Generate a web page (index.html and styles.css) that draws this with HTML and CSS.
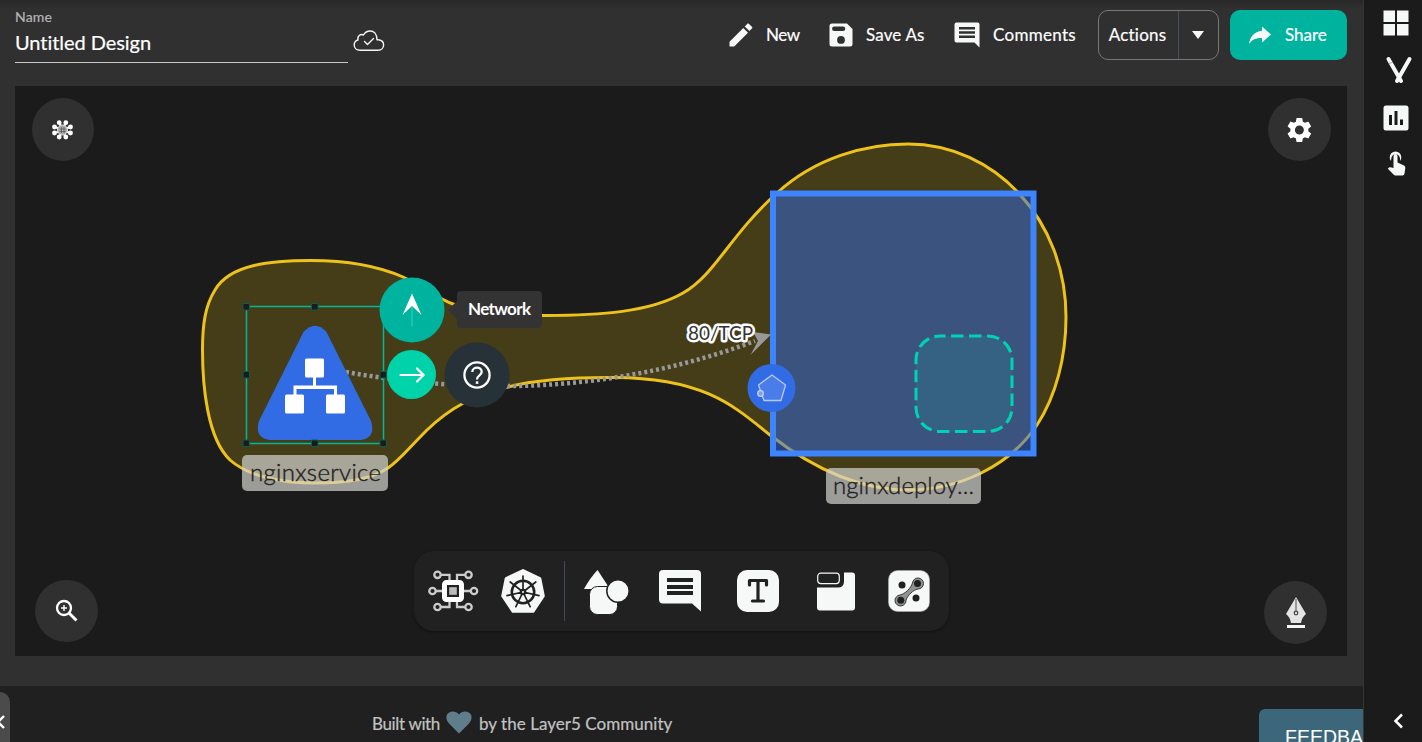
FILE: index.html
```html
<!DOCTYPE html>
<html lang="en">
<head>
<meta charset="utf-8">
<title>Untitled Design</title>
<link rel="stylesheet" href="styles.css">
</head>
<body>
<div class="app">
  <main class="main">
    <header class="header">
      <div class="name-field">
        <label class="name-label">Name</label>
        <div class="name-value">Untitled Design</div>
      </div>
      <svg class="cloud" width="32" height="22" viewBox="0 0 32 22" fill="none" stroke="#f5f5f5" stroke-width="1.4" stroke-linecap="round" stroke-linejoin="round"><path d="M7 20.3C3.500 20.300 1.200 18 1.200 15C1.200 12.500 2.800 10.600 5 10C4 6 7.600 3.600 10.500 5C12 2.300 14.300 1 17 1C21 1 24 4 24 9.800C24.300 9.700 25 9.700 25.500 9.800C28.500 10.200 30.600 12.300 30.600 15C30.600 18 28.300 20.300 25 20.300Z"/><path d="M11.500 11.500L14.500 14.500L20.500 8.500"/></svg>
      <nav class="actions">
        <button class="link new"><svg width="24" height="24" viewBox="0 0 24 24"><path d="M0.500 18.800V23.500H5.200L19 9.700L14.300 5ZM22.900 5.600C23.500 5.100 23.500 4.300 22.900 3.800L20 .900C19.500.400 18.700.400 18.200.900L15.700 3.400L20.400 8.100Z"/></svg><span>New</span></button>
        <button class="link save"><svg width="24" height="24" viewBox="0 0 24 24"><path fill-rule="evenodd" d="M3 .500H18L23.500 6V21A2.500 2.500 0 0 1 21 23.500H3A2.500 2.500 0 0 1 .500 21V3A2.500 2.500 0 0 1 3 .500ZM5.300 3.500A2 2 0 0 0 5.300 8H14A2 2 0 0 0 14 3.500ZM12 13A3.900 3.900 0 1 0 12 20.800A3.900 3.900 0 1 0 12 13Z"/></svg><span>Save As</span></button>
        <button class="link comments"><svg width="26" height="26" viewBox="0 0 26 26"><path fill-rule="evenodd" d="M2.500.500H23.500A2 2 0 0 1 25.500 2.500V25.500L20.500 20.500H2.500A2 2 0 0 1 .500 18.500V2.500A2 2 0 0 1 2.500.500ZM5 5V7.500H21V5ZM5 9.300V11.800H21V9.300ZM5 13.500V16H21V13.500Z"/></svg><span>Comments</span></button>
        <div class="split"><button class="split-main">Actions</button><button class="split-arrow"><svg width="12" height="8" viewBox="0 0 12 8"><path d="M0 0H12L6 8Z"/></svg></button></div>
        <button class="share"><svg width="24" height="20" viewBox="0 0 24 20"><path d="M14 1.500L23 9.500L14 17.500V13C8 13 4 14.500 1 19C2 12 6 6.500 14 5.800Z"/></svg><span>Share</span></button>
      </nav>
    </header>

    <section class="canvas">
      <svg class="graph" width="1332" height="570" viewBox="15 86 1332 570">
        <path class="bubble" d="M202.500 350C202.500 325 205 306 215 290C230 264 272 260.500 311 260.500C345 260.500 378 266 403 277C425 287 438 299 453 304C480 313 510 315.500 545 315.500C600 315.500 650 312 683 293C715 275 730 235 777 193C815 158 865 144 908 144C995 144 1066 220 1066 317C1066 357 1056 396 1037 425C1009 467 958 490 908 490C862 490 815 470 770 435C735 407 705 378 615 377.500C570 377 530 381 508 387C470 397 450 408 427 430C405 452 400 460 388 468C370 480 345 483 315 483C280 483 248 476 230 460C207 438 202.500 385 202.500 350Z"/>
        <rect x="773" y="193" width="260.500" height="260" fill="#326ce5" fill-opacity=".5"/>
        <rect x="773" y="193.500" width="260.500" height="260" fill="none" stroke="#3d84fd" stroke-width="6"/>
        <rect x="916" y="336" width="96" height="95.500" rx="24" fill="#00d3a9" fill-opacity=".1" stroke="#00d3b5" stroke-width="3" stroke-dasharray="12.500 5.500" stroke-dashoffset="7"/>
        <path class="edge" d="M346 372C470 394 610 395 755 341"/>
        <path d="M771 334.500L753 332L758 341L750.500 355Z" fill="#999"/>
        <text class="edge-label" x="688" y="340" textLength="65" lengthAdjust="spacingAndGlyphs">80/TCP</text>
        <circle cx="771.500" cy="388" r="24" fill="#326ce5"/>
        <path d="M772 375L785.500 385L781 400.500H764L758.500 385Z" fill="#fff" fill-opacity=".12" stroke="#b5c9f6" stroke-width="1.300" stroke-linejoin="round"/>
        <circle cx="760.500" cy="393.500" r="2.800" fill="#7ba0ee" stroke="#c8d7f9" stroke-width="1.200"/>

        <rect x="246.500" y="306.500" width="137" height="137" fill="none" stroke="#04b596" stroke-width="1.500"/>
        <path d="M303.500 332Q315 319.500 326.500 332L371 421Q376 438 361 440H270Q254 438 259 421Z" fill="#326ce5"/>
        <g fill="#fff"><rect x="305" y="358.500" width="19" height="19" rx="1.500"/><rect x="285" y="394.500" width="19" height="19" rx="1.500"/><rect x="326" y="394.500" width="19" height="19" rx="1.500"/><path d="M313 377H316V385.500H337V395H334V389H296.500V395H293.500V385.500H313Z"/></g>
        <g fill="#1b1b1b" stroke="#0d5c4d" stroke-width="1"><path d="M243 303.500h6.500v6.500h-6.500zM311.500 303.500h6.500v6.500h-6.500zM243 371.500h6.500v6.500h-6.500zM380 371.500h6.500v6.500h-6.500zM243 440h6.500v6.500h-6.500zM311.500 440h6.500v6.500h-6.500zM380 440h6.500v6.500h-6.500z"/></g>
        <rect class="plate" x="242" y="455" width="146" height="36" rx="5"/>
        <text class="node-label" x="250" y="481" textLength="131">nginxservice</text>
        <rect class="plate" x="826" y="468" width="155" height="36" rx="5"/>
        <text class="node-label" x="833" y="494" textLength="141">nginxdeploy...</text>

        <circle cx="412" cy="310" r="32.500" fill="#00b39f"/>
        <path d="M412 293.500L421.500 315L412 306L402.500 315Z" fill="#fff"/><path d="M411 307H413V326H411Z" fill="#24c0ae"/>
        <circle cx="411.500" cy="374.500" r="24.500" fill="#00d3a9"/>
        <path d="M400.500 375H423M417 368.500L423.500 375L417 381.500" fill="none" stroke="#fff" stroke-width="2.200" stroke-linecap="round"/>
        <circle cx="477" cy="375" r="32.500" fill="#263238"/>
        <circle cx="477" cy="375" r="12.600" fill="none" stroke="#fff" stroke-width="2.300"/>
        <path d="M472.300 372C472.300 366.300 481.700 366.300 481.700 371.800C481.700 375.500 477 375.300 477 379.500" fill="none" stroke="#fff" stroke-width="2.300"/><rect x="475.800" y="381.300" width="2.500" height="2.600" fill="#fff"/>
        <path d="M448 310L457 301V319Z" fill="#333"/><rect x="457" y="291" width="85" height="37" rx="4" fill="#333"/>
        <text class="tip" x="468" y="315" textLength="63">Network</text>
      </svg>

      <button class="round top-left"><svg width="22" height="22" viewBox="-10.5 -11 22 22"><g stroke="#fff" stroke-width="2.200"><path d="M-3.300-7.500L3.300 7.500M3.300-7.500L-3.300 7.500M-7.500-3L7.500 3M-7.500 3L7.500-3"/></g><g fill="#fff"><circle cx="-3.300" cy="-7.300" r="2.400"/><circle cx="3.300" cy="-7.300" r="2.400"/><circle cx="-3.300" cy="7" r="2.400"/><circle cx="3.300" cy="7" r="2.400"/><circle cx="-8" cy="-3" r="2.400"/><circle cx="-8" cy="3" r="2.400"/><circle cx="8" cy="-3" r="2.400"/><circle cx="8" cy="3" r="2.400"/></g><circle r="5" fill="#aaa" stroke="#ddd"/><path d="M-3-1H3M-3 1.500H3M-1-3V3M1.500-3V3" stroke="#555" stroke-width=".7"/></svg></button>
      <button class="round top-right"><svg width="30" height="30" viewBox="0.5 0 24 24"><path d="M19.140 12.940c.040-.300.060-.610.060-.940 0-.320-.020-.640-.070-.940l2.030-1.580c.180-.140.230-.410.120-.610l-1.920-3.320c-.120-.220-.370-.290-.590-.220l-2.390.960c-.500-.380-1.030-.700-1.620-.940l-.360-2.540c-.040-.240-.240-.410-.480-.410h-3.840c-.240 0-.430.170-.470.410l-.360 2.540c-.590.240-1.130.570-1.620.940l-2.390-.960c-.220-.080-.470 0-.590.220L2.740 8.870c-.120.210-.080.470.120.610l2.030 1.580c-.050.300-.090.630-.090.940s.020.640.070.940l-2.030 1.580c-.180.140-.230.410-.120.610l1.920 3.320c.120.220.370.290.590.220l2.390-.960c.500.380 1.030.700 1.620.940l.360 2.540c.050.240.240.410.480.410h3.840c.240 0 .440-.170.470-.410l.360-2.540c.590-.240 1.130-.560 1.620-.940l2.390.960c.220.080.470 0 .590-.220l1.920-3.320c.120-.220.070-.470-.120-.610zM12 15.600c-1.980 0-3.600-1.620-3.600-3.600s1.620-3.600 3.600-3.600 3.600 1.620 3.600 3.600-1.620 3.600-3.600 3.600z"/></svg></button>
      <button class="round bottom-left"><svg width="24" height="24" viewBox="0.5 0.5 24 24" fill="none" stroke="#fff"><circle cx="9.500" cy="9.500" r="7" stroke-width="2.300"/><path d="M14.500 14.500L22 22" stroke-width="3"/><path d="M6.500 9.500H12.500M9.500 6.500V12.500" stroke-width="1.400"/></svg></button>
      <button class="round bottom-right"><svg width="20" height="32" viewBox="0 0 20 32"><path d="M10 0L20 17Q16 20 15 26H5Q4 20 0 17Z" fill="#e4e4e4"/><path d="M10 2V14" stroke="#666" stroke-width="1.200"/><circle cx="10" cy="16" r="1.800" fill="#ddd" stroke="#444" stroke-width="1.200"/><path d="M1 28H19V31H1Z" fill="#f5f5f5"/></svg></button>

      <div class="dock">
        <svg width="50" height="44" viewBox="428 569 50 44"><g fill="none" stroke="#ccc" stroke-width="2.300"><path d="M449.500 580V574.800H441M457 580V574.800H465M449.500 600V607H441M457 600V607H465M442 591H436M463 591H470"/><circle cx="437.500" cy="574.800" r="3.200"/><circle cx="468.500" cy="574.800" r="3.200"/><circle cx="437.500" cy="607" r="3.200"/><circle cx="468.500" cy="607" r="3.200"/><circle cx="432.500" cy="591" r="3.200"/><circle cx="474" cy="591" r="3.200"/></g><rect x="444.500" y="582.500" width="17" height="17" rx="2" fill="#212121" stroke="#fff" stroke-width="5"/><rect x="449.200" y="587.200" width="7.600" height="7.600" fill="#bbb"/></svg>
        <svg class="wheel-icon" width="44" height="44" viewBox="-22 -22 44 44"><path d="M0-20.500L16.800-12.400L20.300 5L10 20.300H-10L-20.300 5L-16.800-12.400Z" fill="#f6f8f8" stroke="#f6f8f8" stroke-width="3" stroke-linejoin="round"/><g fill="none" stroke="#212121"><circle cy="1" r="11.200" stroke-width="2.600"/><g stroke-width="1.700" stroke-linecap="round"><path d="M0 1V-15M0 1L12.800-9M0 1L16 4.600M0 1L7.100 15.700M0 1L-7.100 15.700M0 1L-16 4.600M0 1L-12.800-9"/></g></g><circle cy="1" r="3.300" fill="#212121"/><circle cy="1" r="1" fill="#fff"/></svg>
        <i class="rule"></i>
        <svg class="shapes-icon" width="46" height="46" viewBox="583 569 46 46" fill="#f6f8f8"><path d="M597.500 570L610 589H584Q590 578 597.500 570Z"/><rect x="589.500" y="586.500" width="28" height="28" rx="8" stroke="#212121"/><circle cx="618" cy="591" r="11.200" stroke="#212121" stroke-width="1.500"/></svg>
        <svg class="note-icon" width="42" height="42" viewBox="0 0 42 42"><path fill="#f6f8f8" d="M4 0H38Q42 0 42 4V41.500L33 33.500H4Q0 33.500 0 29.500V4Q0 0 4 0Z"/><path d="M8 8H34V12H8ZM8 15H34V19H8ZM8 21H34V25H8Z" fill="#212121"/></svg>
        <svg class="text-icon" width="42" height="42" viewBox="0 0 42 42"><rect width="42" height="42" rx="10" fill="#f6f8f8"/><path d="M12.500 15V10.500H29.500V15M21 10.500V31M15.500 31H26.500" fill="none" stroke="#212121" stroke-width="3.200" stroke-linecap="round" stroke-linejoin="round"/></svg>
        <svg class="group-icon" width="38" height="39" viewBox="0 0 38 39"><path fill="#f6f8f8" d="M27 .500H35Q38 .500 38 3.500V35.500Q38 38.500 35 38.500H3Q0 38.500 0 35.500V15.500H21Q27 15.500 27 9.500Z"/><rect x=".7" y="1.200" width="21.600" height="10.400" rx="3" fill="#212121" stroke="#f6f8f8" stroke-width="1.200"/></svg>
        <svg class="bone-icon" width="42" height="42" viewBox="0 0 42 42"><rect x=".5" y=".5" width="41" height="41" rx="9" fill="#f6f8f8" stroke="#aaa" stroke-width=".6"/><path d="M24.500 13A5.500 5.500 0 1 1 30 19C25 20 20 25 18 30A5.500 5.500 0 1 1 12 25C17 24 23 18 24.500 13Z" fill="#909292" stroke="#3a3a3a"/><g fill="#202020"><circle cx="14" cy="15" r="3.500"/><circle cx="28" cy="28" r="3.500"/><circle cx="29.500" cy="13.500" r="3.500"/><circle cx="12.800" cy="30.300" r="3.500"/></g></svg>
      </div>
    </section>

    <footer class="footer">
      <div class="handle"><svg width="10" height="16" viewBox="0 0 10 16"><path d="M4 2L-2 8L4 14" fill="none" stroke="#fff" stroke-width="2.400"/></svg></div>
      <p class="built"><span class="built-with">Built with</span><svg width="26" height="23" viewBox="0 0 26 23"><path d="M13 22.500L3 12.500C-5 3 7-3.500 13 3.500C19-3.500 31 3 23 12.500Z" fill="#607d8b"/></svg><span class="community">by the Layer5 Community</span></p>
      <button class="feedback">FEEDBACK</button>
    </footer>
  </main>

  <aside class="sidebar">
    <svg width="26" height="26" viewBox="0 0 26 26"><path d="M.500.500H12V12H.500ZM14 .500H25.500V12H14ZM.500 14H12V25.500H.500ZM14 14H25.500V25.500H14Z"/></svg>
    <svg class="y-icon" width="28" height="28" viewBox="0 0 28 28" fill="none" stroke="#f6f8f8" stroke-width="4"><path d="M3.500 3L16 25" stroke-linecap="round"/><path d="M24.500 3L12 25" stroke-linecap="round"/><path d="M3 8L8 6" stroke="#777" stroke-width=".6"/></svg>
    <svg class="chart-icon" width="26" height="26" viewBox="0 0 26 26"><path fill-rule="evenodd" d="M3 .500H23Q25.500.500 25.500 3V23Q25.500 25.500 23 25.500H3Q.500 25.500.500 23V3Q.500.500 3 .500ZM6 10V20H9V10ZM11.500 6V20H14.500V6ZM17 14.500V20H20V14.500Z"/></svg>
    <svg class="touch-icon" width="20" height="26" viewBox="0 0 20 26"><path d="M4 11A5.800 5.800 0 1 1 13 11V8.500A3.600 3.600 0 0 0 4.300 8.500Z"/><path d="M6.500 6.300Q6.500 4 8.500 4T10.500 6.300V12.500L17 15.500Q18.500 16.300 18.300 18L17.500 23.500Q17.200 25.500 15.500 25.500H8.500Q7.500 25.500 6.800 24.700L.800 18.700L2 17.500Q2.600 17 3.400 17.200L6.500 18Z"/></svg>
    <svg class="chevron" width="12" height="16" viewBox="0 0 12 16"><path d="M10 1.500L3.500 8L10 14.500" fill="none" stroke="#fff" stroke-width="2.500"/></svg>
  </aside>
</div>
</body>
</html>
```

FILE: styles.css
```css
* { box-sizing: border-box; }
body { margin: 0; overflow: hidden; background: #303030; font-family: Lato, "Open Sans", sans-serif; color: #fff; }
button { margin: 0; padding: 0; border: 0; background: none; color: inherit; font: inherit; letter-spacing: inherit; white-space: nowrap; }
svg { display: block; flex: none; overflow: visible; }

.app { display: grid; grid-template-columns: 1363px 59px; width: 1422px; height: 742px; }
.main { display: grid; grid-template-rows: 86px 570px 30px 56px; min-width: 0; overflow: hidden; background: #303030; }

.header { display: flex; padding: 0 16px 0 15px; background: linear-gradient(#282828, #303030 9px); }
.name-field { width: 333px; height: 63px; padding-top: 8px; border-bottom: 1px solid #c8c8c8; }
.name-label { display: block; font-size: 14px; line-height: 18px; letter-spacing: .2px; color: #b5b5b5; -webkit-text-stroke: .2px; }
.name-value { margin-top: 4px; font-size: 20px; line-height: 24px; letter-spacing: -.05px; -webkit-text-stroke: .2px; }
.cloud { margin: 30px 0 0 5px; }
.actions { display: flex; margin-left: auto; padding-top: 10px; height: 60px; font-size: 17px; fill: #f6f8f8; -webkit-text-stroke: .2px; }
.link { display: flex; align-items: center; gap: 13px; }
.link span, .share span { padding-bottom: 2px; }
.new { width: 100px; letter-spacing: -.4px; }
.save { width: 125px; letter-spacing: .15px; }
.comments { width: 144px; letter-spacing: .3px; }
.split { display: flex; width: 121px; height: 50px; border: 1px solid #777; border-radius: 10px; }
.split-main { width: 80px; padding: 0 2px 2px 0; letter-spacing: .2px; border-right: 1px solid #46505f; }
.split-arrow { flex: 1; display: flex; align-items: center; justify-content: center; padding-right: 1px; }
.share { display: flex; align-items: center; gap: 13px; width: 117px; height: 50px; margin-left: 11px; padding-left: 18px; border-radius: 10px; background: #00b39f; }

.canvas { position: relative; width: 1332px; height: 570px; margin-left: 15px; background: #1b1b1b; }
.bubble { fill: #f1c40f; fill-opacity: .2; stroke: #edc21a; stroke-width: 3; }
.edge { fill: none; stroke: #999; stroke-width: 4.500; stroke-dasharray: 3 3; }
.edge-label { font-size: 19px; fill: #333; stroke: #fff; stroke-width: 5px; stroke-linejoin: round; paint-order: stroke; }
.node-label { font-size: 24px; font-weight: 300; fill: #222; stroke: #222; stroke-width: .4px; }
.plate { fill: #d3d3cf; fill-opacity: .7; }
.tip { font-size: 17px; font-weight: 700; fill: #fff; }

.round { position: absolute; display: flex; align-items: center; justify-content: center; width: 63px; height: 63px; border-radius: 50%; background: #303030; fill: #fff; }
.top-left { left: 17px; top: 12px; width: 62px; }
.top-right { right: 16px; top: 12px; }
.bottom-left { left: 20px; bottom: 14px; height: 62px; }
.bottom-right { right: 20px; bottom: 12px; }

.dock { position: absolute; left: 399px; top: 465px; display: flex; align-items: center; width: 535px; height: 80px; padding-left: 14px; border-radius: 20px; background: #212121; box-shadow: 0 1px 3px rgba(0, 0, 0, .4); }
.wheel-icon { margin-left: 23px; }
.rule { width: 1px; height: 60px; margin-left: 19px; background: #434a59; }
.shapes-icon { margin: 2px 0 0 18px; }
.note-icon { margin-left: 30px; }
.text-icon { margin-left: 36px; }
.group-icon { margin-left: 38px; }
.bone-icon { margin: -1px 0 0 33px; }

.footer { grid-row: 4; position: relative; display: flex; justify-content: space-between; overflow: hidden; background: #202020; }
.handle { display: flex; align-items: center; width: 10px; height: 60px; margin-top: 6px; border-radius: 0 14px 14px 0; background: #4b4b4b; overflow: hidden; }
.built { display: flex; align-items: center; height: 26px; margin: 24px auto 0 362px; font-size: 17px; color: #c2c2c2; -webkit-text-stroke: .2px; }
.built svg { margin: 1px 7px 2px 6px; }
.built-with { letter-spacing: -.35px; }
.community { letter-spacing: .04px; }
.feedback { width: 104px; height: 50px; margin-top: 23px; padding: 7px 0 0 26px; border-radius: 6px 0 0 0; background: #3c677a; font-family: "Liberation Sans", Arial, sans-serif; font-size: 19.500px; text-align: left; overflow: hidden; }

.sidebar { display: flex; flex-direction: column; padding: 10px 0 13px 19px; border-left: 1px solid #343434; background: #1b1b1b; fill: #f6f8f8; }
.y-icon { margin: 20px 0 0 2px; }
.chart-icon { margin-top: 21px; }
.touch-icon { margin: 19px 0 0 4px; }
.chevron { margin: auto 0 0 9px; }
```
